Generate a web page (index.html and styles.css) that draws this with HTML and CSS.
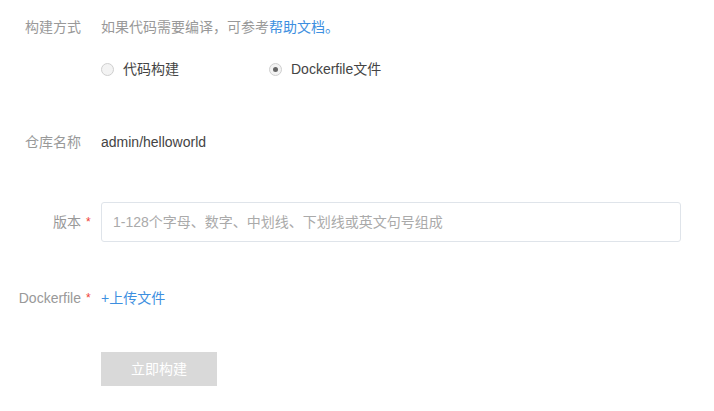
FILE: index.html
```html
<!DOCTYPE html>
<html lang="zh-CN">
<head>
<meta charset="utf-8">
<title>构建</title>
<link rel="stylesheet" href="styles.css">
</head>
<body>
<form class="form">
  <div class="row row-method">
    <div class="label">构建方式</div>
    <div class="req"></div>
    <div class="content hint">如果代码需要编译，可参考<a class="link" href="#">帮助文档。</a></div>
  </div>
  <div class="row row-radios">
    <div class="label"></div>
    <div class="req"></div>
    <div class="content radios">
      <label class="radio"><span class="dot"></span><span class="radio-text">代码构建</span></label>
      <label class="radio checked"><span class="dot"></span><span class="radio-text">Dockerfile文件</span></label>
    </div>
  </div>
  <div class="row row-repo">
    <div class="label">仓库名称</div>
    <div class="req"></div>
    <div class="content value">admin/helloworld</div>
  </div>
  <div class="row row-version">
    <div class="label">版本</div>
    <div class="req star">*</div>
    <div class="content">
      <input class="input" type="text" placeholder="1-128个字母、数字、中划线、下划线或英文句号组成">
    </div>
  </div>
  <div class="row row-file">
    <div class="label">Dockerfile</div>
    <div class="req star">*</div>
    <div class="content"><a class="link upload" href="#">+上传文件</a></div>
  </div>
  <div class="row row-submit">
    <div class="label"></div>
    <div class="req"></div>
    <div class="content"><button class="btn" type="button">立即构建</button></div>
  </div>
</form>
</body>
</html>
```
FILE: styles.css
```css
* { box-sizing: border-box; }
html, body { margin: 0; padding: 0; background: #fff; }
body {
  font-family: "Liberation Sans", Arial, "Noto Sans CJK SC", sans-serif;
  font-size: 14px;
  color: #444;
}
.form {
  display: flex;
  flex-direction: column;
  padding-top: 17px;
}
.row {
  display: flex;
  align-items: center;
  line-height: 20px;
}
.label {
  width: 81px;
  flex: none;
  text-align: right;
  color: #999;
  white-space: nowrap;
}
.req {
  width: 20px;
  flex: none;
  padding-left: 5px;
}
.star {
  color: #f04134;
  font-size: 12px;
}
.content { flex: none; }
.hint { color: #999; }
.link { color: #3d8fe0; text-decoration: none; }
.value { color: #444; }

.row-radios { margin-top: 22px; }
.radios { display: flex; }
.radio { display: flex; align-items: center; color: #444; cursor: pointer; }
.radio:first-child { width: 168px; }
.dot {
  width: 13px;
  height: 13px;
  border-radius: 50%;
  border: 1px solid #cfcfcf;
  background: #f3f3f3;
  margin-right: 9px;
  display: flex;
  align-items: center;
  justify-content: center;
}
.checked .dot::after {
  content: "";
  width: 5px;
  height: 5px;
  border-radius: 50%;
  background: #666;
}

.row-repo { margin-top: 53px; }
.row-version { margin-top: 50px; }
.input {
  display: block;
  width: 580px;
  height: 40px;
  border: 1px solid #dfe4ea;
  border-radius: 3px;
  padding: 0 11px;
  font: inherit;
  color: #444;
  outline: none;
}
.input::placeholder { color: #aaa; }

.row-file { margin-top: 46px; }
.upload { font-size: 14px; }

.row-submit { margin-top: 44px; }
.btn {
  width: 116px;
  height: 34px;
  border: 0;
  border-radius: 0;
  background: #d9d9d9;
  color: #fff;
  font: inherit;
  font-size: 14px;
  padding: 0;
}
```
